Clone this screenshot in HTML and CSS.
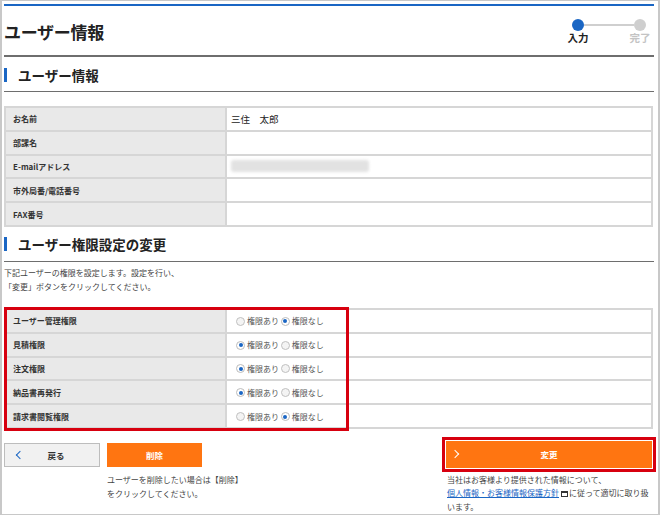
FILE: index.html
```html
<!DOCTYPE html>
<html lang="ja">
<head>
<meta charset="utf-8">
<link rel="stylesheet" href="styles.css">
</head>
<body>
<div class="page">
  <header class="head">
    <h1 class="title">ユーザー情報</h1>
    <div class="steps">
      <div class="step active"><span class="dot"></span><span class="lbl">入力</span></div>
      <div class="bar"></div>
      <div class="step"><span class="dot"></span><span class="lbl">完了</span></div>
    </div>
  </header>

  <h2 class="sec">ユーザー情報</h2>
  <table class="tbl info">
    <tr><th>お名前</th><td>三住　太郎</td></tr>
    <tr><th>部課名</th><td></td></tr>
    <tr><th>E-mailアドレス</th><td><div class="blur"></div></td></tr>
    <tr><th>市外局番/電話番号</th><td></td></tr>
    <tr><th>FAX番号</th><td></td></tr>
  </table>

  <h2 class="sec sec2">ユーザー権限設定の変更</h2>
  <p class="desc">下記ユーザーの権限を設定します。設定を行い、<br>「変更」ボタンをクリックしてください。</p>

  <div class="permwrap">
    <table class="tbl perm">
      <tr><th>ユーザー管理権限</th><td><span class="rd"></span>権限あり <span class="rd on"></span>権限なし</td></tr>
      <tr><th>見積権限</th><td><span class="rd on"></span>権限あり <span class="rd"></span>権限なし</td></tr>
      <tr><th>注文権限</th><td><span class="rd on"></span>権限あり <span class="rd"></span>権限なし</td></tr>
      <tr><th>納品書再発行</th><td><span class="rd on"></span>権限あり <span class="rd"></span>権限なし</td></tr>
      <tr><th>請求書閲覧権限</th><td><span class="rd"></span>権限あり <span class="rd on"></span>権限なし</td></tr>
    </table>
    <div class="mark markperm"></div>
  </div>

  <div class="actions">
    <div class="left">
      <button class="btn back"><span class="chev chevb"></span><span class="btxt">戻る</span></button>
      <div class="delcol">
        <button class="btn del">削除</button>
        <p class="note">ユーザーを削除したい場合は【削除】<br>をクリックしてください。</p>
      </div>
    </div>
    <div class="right">
      <div class="chgwrap">
        <button class="btn chg"><span class="chev chevw"></span><span class="btxt">変更</span></button>
        <div class="mark markchg"></div>
      </div>
      <p class="note note2">当社はお客様より提供された情報について、<br><a class="lnk">個人情報・お客様情報保護方針</a><span class="ext"></span>に従って適切に取り扱<br>います。</p>
    </div>
  </div>
</div>
</body>
</html>
```

FILE: styles.css
```css
* { box-sizing: border-box; }
html, body { margin: 0; padding: 0; background: #fff; }
body {
  font-family: "Noto Sans CJK JP", "Noto Sans", sans-serif;
  color: #333;
}
.page {
  width: 660px;
  height: 515px;
  border: 1px solid #c8c8c8;
  border-left-width: 2px;
  border-right-width: 2px;
  padding: 3px 4px 0 2px;
  overflow: hidden;
}
.head {
  border-top: 2px solid #1a66c4;
  border-bottom: 2px solid #6e6e6e;
  height: 53px;
  display: flex;
  justify-content: space-between;
  align-items: center;
}
.title {
  margin: 0;
  font-size: 17px;
  font-weight: bold;
  color: #222;
  letter-spacing: -0.3px;
  position: relative;
  top: 1px;
}
.steps {
  display: flex;
  align-items: flex-start;
  margin-right: 1px;
  padding-top: 2px;
}
.step {
  display: flex;
  flex-direction: column;
  align-items: center;
  width: 26px;
}
.dot {
  width: 12px;
  height: 12px;
  border-radius: 50%;
  background: #cfcfcf;
}
.step.active .dot { background: #1a66c4; }
.lbl {
  font-size: 10.5px;
  font-weight: bold;
  color: #c4c4c4;
  line-height: 14px;
}
.step.active .lbl { color: #222; }
.bar {
  width: 50px;
  height: 2px;
  background: #cfcfcf;
  margin: 5px -7px 0;
}
.sec {
  margin: 0;
  height: 35px;
  border-bottom: 1.5px solid #6e6e6e;
  display: flex;
  align-items: center;
  gap: 11px;
  font-size: 13.5px;
  font-weight: bold;
  color: #222;
  padding-top: 1px;
}
.sec::before {
  content: "";
  width: 3px;
  height: 14px;
  background: #1a66c4;
}
.tbl {
  width: 649px;
  border-collapse: collapse;
  border: 2px solid #d6d6d6;
}
.info { margin-top: 14px; }
.tbl th, .tbl td {
  border: 2px solid #d6d6d6;
  height: 23.8px;
  padding: 0 0 0 7px;
  text-align: left;
  vertical-align: middle;
}
.tbl th {
  width: 221px;
  background: #e9e9e9;
  font-size: 8px;
  font-weight: bold;
  color: #333;
}
.tbl td {
  font-size: 9.5px;
  color: #222;
  padding-left: 4px;
}
.blur {
  width: 138px;
  height: 12px;
  background: #e2e2e2;
  filter: blur(1.5px);
  border-radius: 3px;
}
.sec2 { height: 35px; }
.desc {
  margin: 4px 0 0 0;
  font-size: 8px;
  line-height: 14px;
  color: #444;
}
.permwrap {
  position: relative;
  margin-top: 14px;
}
.perm td {
  font-size: 8px;
  color: #555;
  padding-left: 9px;
}
.rd {
  display: inline-block;
  width: 9px;
  height: 9px;
  border-radius: 50%;
  border: 1px solid #c0c0c0;
  background: #f4f4f4;
  vertical-align: -1.5px;
  margin-right: 2px;
  position: relative;
}
.rd.on { border-color: #bcbcbc; background: #fff; }
.rd.on::after {
  content: "";
  position: absolute;
  left: 1.5px;
  top: 1.5px;
  width: 4px;
  height: 4px;
  border-radius: 50%;
  background: #1a66c4;
}
.mark {
  position: absolute;
  border: 3px solid #d7000f;
  pointer-events: none;
}
.markperm {
  left: 0;
  top: -1px;
  width: 345px;
  height: 124px;
}
.actions {
  display: flex;
  justify-content: space-between;
  margin-top: 8px;
}
.left {
  display: flex;
  gap: 7px;
  padding-top: 6px;
}
.btn {
  font-family: inherit;
  border: none;
  cursor: pointer;
  height: 24px;
  font-size: 8.5px;
  font-weight: bold;
  display: flex;
  align-items: center;
  padding: 0;
}
.back {
  width: 96px;
  background: #f1f1f1;
  border: 1px solid #bdbdbd;
  color: #333;
}
.back .btxt { flex: 1; text-align: center; margin-left: -10px; }
.chev {
  display: inline-block;
  width: 6px;
  height: 6px;
  border-left: 1.5px solid #1a66c4;
  border-bottom: 1.5px solid #1a66c4;
  transform: rotate(45deg);
  margin-left: 12px;
}
.chevw {
  border: none;
  border-right: 1.5px solid #fff;
  border-top: 1.5px solid #fff;
  margin-left: 6px;
}
.delcol { display: flex; flex-direction: column; }
.del {
  width: 95px;
  background: #ff7511;
  color: #fff;
  justify-content: center;
}
.note {
  margin: 6px 0 0 0;
  font-size: 8px;
  line-height: 14px;
  color: #444;
}
.right {
  width: 214px;
  margin-right: -2px;
  display: flex;
  flex-direction: column;
}
.chgwrap {
  position: relative;
  padding: 4px;
}
.chg {
  width: 206px;
  height: 27px;
  background: #ff7511;
  color: #fff;
}
.chg .btxt { flex: 1; text-align: center; margin-left: -12px; }
.markchg {
  left: 0; top: 0; right: 0; bottom: 0;
}
.note2 {
  margin: 1px 0 0 5px;
  line-height: 13.5px;
}
.lnk {
  color: #1a66c4;
  text-decoration: underline;
}
.ext {
  display: inline-block;
  width: 7px;
  height: 6px;
  border: 1.5px solid #333;
  border-top-width: 2.5px;
  margin: 0 1px 0 2px;
  vertical-align: -0.5px;
}
```
